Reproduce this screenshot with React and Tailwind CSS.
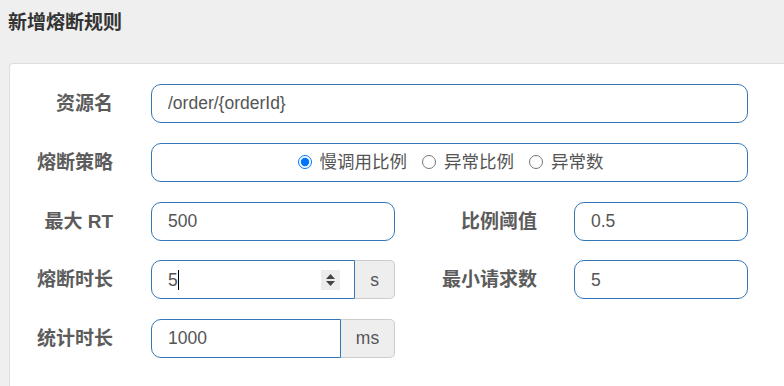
import { useState } from "react";

const FONT = "font-['Liberation_Sans','Noto_Sans_CJK_SC',sans-serif]";

// Bordered text box used by every field
const TextBox = ({ value, className = "" }) => (
  <div
    className={`h-[39px] flex items-center pl-[16px] border border-[#3477b9] bg-white text-[17.5px] text-[#555] ${className}`}
  >
    {value}
  </div>
);

const Label = ({ children, width }) => (
  <div className={`${width} shrink-0 text-right font-bold text-[19px] text-[#5c5c5c] leading-none`}>{children}</div>
);

const Addon = ({ children, width }) => (
  <div
    className={`${width} h-[39px] flex items-center justify-center bg-[#eee] border border-l-0 border-[#ccc] rounded-r-[5px] text-[17.5px] text-[#555]`}
  >
    {children}
  </div>
);

const Radio = ({ label, checked, onChange }) => (
  <label className="flex items-center cursor-pointer">
    <input type="radio" name="grade" checked={checked} onChange={onChange} className="w-[14px] h-[14px] m-0" />
    <span className="ml-[8px] text-[17.5px] text-[#555]">{label}</span>
  </label>
);

export default function App() {
  const [grade, setGrade] = useState(0);
  const options = ["慢调用比例", "异常比例", "异常数"];

  return (
    <div className={`min-h-screen w-full bg-[#efefef] overflow-hidden ${FONT}`}>
      <div className="h-[63px] pl-[8px] pt-[10px]">
        <h1 className="text-[19px] font-bold text-[#333] leading-[26px]">新增熔断规则</h1>
      </div>

      <div className="ml-[9px] bg-white border border-r-0 border-b-0 border-[#ddd] rounded-tl-[4px] pt-[20px] h-[330px]">
        <div className="flex flex-col gap-[19.75px]">
          {/* resource */}
          <div className="flex items-center">
            <Label width="w-[103px]">资源名</Label>
            <TextBox value="/order/{orderId}" className="ml-[38px] w-[597px] rounded-[10px]" />
          </div>

          {/* strategy */}
          <div className="flex items-center">
            <Label width="w-[103px]">熔断策略</Label>
            <div className="ml-[38px] w-[597px] h-[39px] border border-[#3477b9] rounded-[10px] flex items-center justify-center gap-[15px] pl-[2px]">
              {options.map((o, i) => (
                <Radio key={o} label={o} checked={grade === i} onChange={() => setGrade(i)} />
              ))}
            </div>
          </div>

          {/* max RT / ratio */}
          <div className="flex items-center">
            <Label width="w-[103px]">最大 RT</Label>
            <TextBox value="500" className="ml-[38px] w-[244px] rounded-[10px]" />
            <Label width="w-[142px]">比例阈值</Label>
            <TextBox value="0.5" className="ml-[37px] w-[174px] rounded-[10px]" />
          </div>

          {/* time window / min requests */}
          <div className="flex items-center">
            <Label width="w-[103px]">熔断时长</Label>
            <div className="ml-[38px] w-[244px] flex">
              <div className="w-[204px] h-[39px] flex items-center pl-[16px] pr-[14px] border border-[#3477b9] rounded-l-[10px] text-[17.5px] text-[#555]">
                <span>5</span>
                <span className="w-px h-[20px] bg-black" />
                <div className="ml-auto w-[19px] h-[20px] bg-[#ececec] flex flex-col items-center justify-center gap-[2px]">
                  <svg width="9" height="5" viewBox="0 0 9 5">
                    <path d="M4.5 0L9 5H0z" fill="#444" />
                  </svg>
                  <svg width="9" height="5" viewBox="0 0 9 5">
                    <path d="M0 0h9L4.5 5z" fill="#444" />
                  </svg>
                </div>
              </div>
              <Addon width="w-[40px]">s</Addon>
            </div>
            <Label width="w-[142px]">最小请求数</Label>
            <TextBox value="5" className="ml-[37px] w-[174px] rounded-[10px]" />
          </div>

          {/* stat interval */}
          <div className="flex items-center">
            <Label width="w-[103px]">统计时长</Label>
            <div className="ml-[38px] w-[244px] flex">
              <TextBox value="1000" className="w-[190px] rounded-l-[10px]" />
              <Addon width="w-[54px]">ms</Addon>
            </div>
          </div>
        </div>
      </div>
    </div>
  );
}
